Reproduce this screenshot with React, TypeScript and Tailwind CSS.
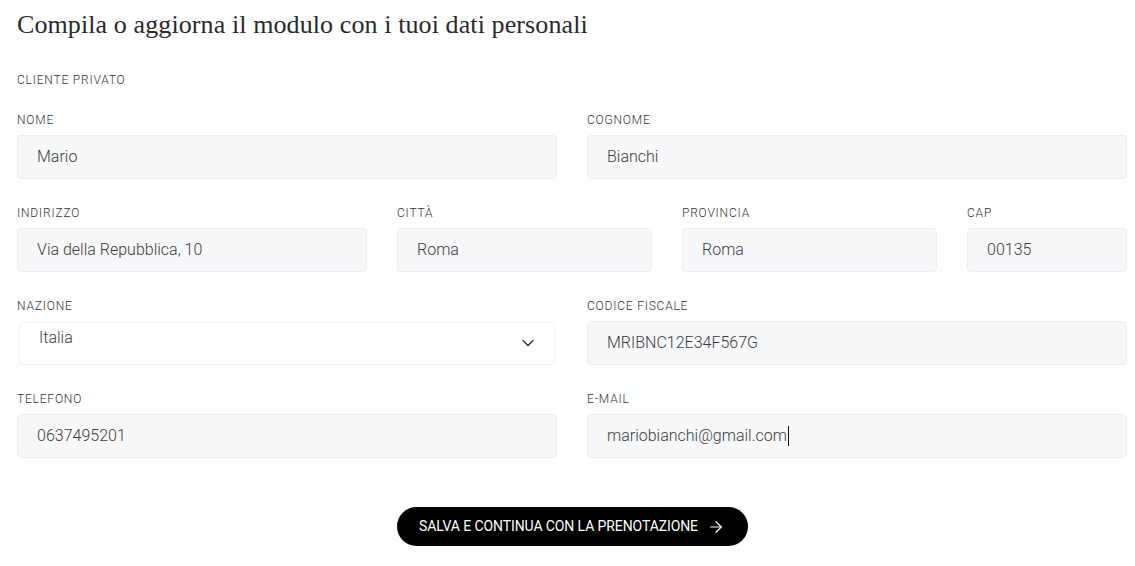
import { ChevronDown, ArrowRight } from "lucide-react";

const sans = "font-['Roboto','Liberation_Sans',sans-serif]";
const labelCls = "text-[12px] leading-[14px] tracking-[0.8px] font-light text-[#333] uppercase";

function Field({ label, value, span, caret }: { label: string; value: string; span: string; caret?: boolean }) {
  return (
    <div className={span}>
      <div className={`${labelCls} mb-[8px]`}>{label}</div>
      <div className="h-[44px] rounded-[4px] border border-[#eceef1] bg-[#f7f8fa] flex items-center px-[19px] text-[16px] font-light text-[#3c3c3c]">
        {value}
        {caret && <span className="inline-block w-px h-[20px] bg-[#111] ml-[1px]" />}
      </div>
    </div>
  );
}

export default function App() {
  return (
    <div className={`bg-white w-[1135px] h-[566px] px-[17px] pt-[7px] ${sans}`}>
      <h1 className="font-['Liberation_Serif',serif] text-[26px] leading-[36px] text-[#2a2a2a] tracking-[0.1px]">
        Compila o aggiorna il modulo con i tuoi dati personali
      </h1>
      <div className={`mt-[30px] ${labelCls}`}>Cliente privato</div>

      <div className="mt-[26px] w-[1110px] grid grid-cols-12 gap-x-[30px] gap-y-[27px]">
        <Field span="col-span-6" label="Nome" value="Mario" />
        <Field span="col-span-6" label="Cognome" value="Bianchi" />

        <Field span="col-span-4" label="Indirizzo" value="Via della Repubblica, 10" />
        <Field span="col-span-3" label="Città" value="Roma" />
        <Field span="col-span-3" label="Provincia" value="Roma" />
        <Field span="col-span-2" label="CAP" value="00135" />

        <div className="col-span-6">
          <div className={`${labelCls} mb-[9px]`}>Nazione</div>
          <div className="h-[43px] mx-[2px] rounded-[4px] border border-[#f2f3f5] bg-white shadow-[0_0_2px_rgba(0,0,0,0.04)] flex items-start justify-between pl-[19px] pr-[16px] text-[16px] font-light text-[#3c3c3c]">
            <span className="pt-[5px] leading-[20px]">Italia</span>
            <ChevronDown className="mt-[10px] w-[20px] h-[20px] text-[#333]" strokeWidth={1.6} />
          </div>
        </div>
        <Field span="col-span-6" label="Codice fiscale" value="MRIBNC12E34F567G" />

        <Field span="col-span-6" label="Telefono" value="0637495201" />
        <Field span="col-span-6" label="E-mail" value="mariobianchi@gmail.com" caret />
      </div>

      <div className="mt-[49px] w-[1110px] flex justify-center">
        <button className="h-[39px] w-[351px] rounded-full bg-black text-white text-[14px] flex items-center justify-center gap-[9px] uppercase tracking-[-0.1px]">
          Salva e continua con la prenotazione
          <ArrowRight className="w-[18px] h-[18px]" strokeWidth={1.6} />
        </button>
      </div>
    </div>
  );
}
